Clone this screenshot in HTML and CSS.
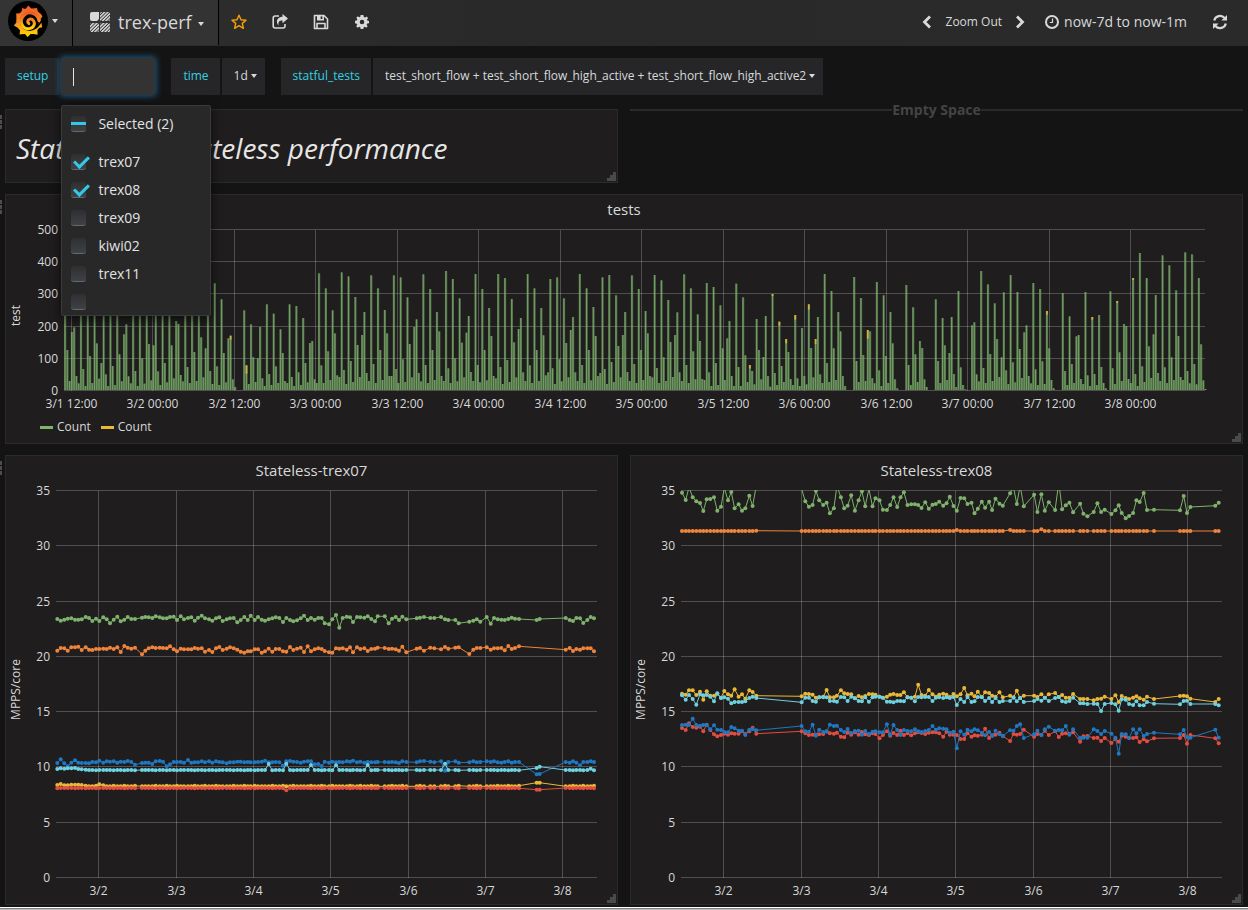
FILE: index.html
```html
<!DOCTYPE html>
<html lang="en">
<head>
<meta charset="utf-8">
<title>trex-perf</title>
<link rel="stylesheet" href="styles.css">
</head>
<body>
<header class="nav">
  <button class="nav-logo" aria-label="Main menu">
    <svg class="logo" viewBox="0 0 40 40" aria-hidden="true">
      <defs><linearGradient id="flame" x1="0" y1="0" x2="0" y2="1"><stop offset="0" stop-color="#f05a28"/><stop offset=".5" stop-color="#f68b22"/><stop offset="1" stop-color="#fcdb05"/></linearGradient></defs>
      <circle cx="20" cy="20" r="20" fill="#000"/>
      <path fill="url(#flame)" d="M20.3 4.5 23.4 7.6 27.3 7.2 29 6.8 29.8 10.6 33.2 13.2 34.4 15.6 32.6 18 33.6 22.6 34.3 26.2 31.2 27 29.4 29 29.6 33.8 25.6 33 22.6 33 19.6 36 17 32.9 13 33.2 11.6 33.4 12 29.2 9.4 26.6 5.8 24.6 8.2 21.8 8.4 17.6 8.2 12.6 11.8 12.2 13.8 10 14 7 17.4 8Z"/>
      <circle cx="21.5" cy="20.5" r="9.6" fill="#000"/>
      <path fill="none" stroke="url(#flame)" stroke-width="3" stroke-linecap="round" d="M31 19.6C29.6 12.6 22 10 17 13.4C12.4 16.6 12.2 22.8 15.4 25.8C18.8 29 24.4 28 26 24.2C27.4 20.6 24.6 17.4 21.6 18.2C19.4 18.8 19 21.4 20.8 22.4"/>
      <path fill="none" stroke="#000" stroke-width="1.6" d="M34.5 18.5C31 24 29.6 25.6 28 27"/>
    </svg>
    <span class="caret"></span>
  </button>
  <button class="nav-dash">
    <svg class="grid-icon" viewBox="0 0 20 20" aria-hidden="true">
      <defs><pattern id="hatch" width="2.4" height="2.4" patternUnits="userSpaceOnUse" patternTransform="rotate(45)"><rect width="1.5" height="2.4" fill="#d8d9da"/></pattern></defs>
      <path fill="#d8d9da" d="M2 0H9V7L7 9H2Q0 9 0 7V2Q0 0 2 0Z"/>
      <rect x="10" width="10" height="9" rx="1.5" fill="url(#hatch)"/>
      <rect y="11" width="9" height="9" rx="1.5" fill="url(#hatch)"/>
      <rect x="10" y="11" width="10" height="9" rx="1.5" fill="url(#hatch)"/>
    </svg>
    <span>trex-perf</span><span class="caret"></span>
  </button>
  <div class="nav-actions">
    <button class="icon-button star" aria-label="Star"><svg viewBox="0 0 16 16"><path fill="none" stroke="currentColor" stroke-width="1.4" stroke-linejoin="round" d="M8 1.2 10 5.7 15 6.2 11.3 9.4 12.4 14.3 8 11.7 3.6 14.3 4.7 9.4 1 6.2 6 5.7Z"/></svg></button>
    <button class="icon-button" aria-label="Share"><svg viewBox="0 0 16 16"><path fill="none" stroke="currentColor" stroke-width="1.6" d="M7 2H3.2Q1.2 2 1.2 4V12Q1.2 14 3.2 14H11Q13 14 13 12V10"/><path fill="currentColor" d="M10.5 0 16 4.6 10.5 9.2V6.6C7.4 6.6 6 7.8 6.6 11.4C3.3 8.2 5 2.8 10.5 2.8Z"/></svg></button>
    <button class="icon-button" aria-label="Save"><svg viewBox="0 0 16 16"><path fill="none" stroke="currentColor" stroke-width="1.6" stroke-linejoin="round" d="M1.5 1.5H11L14.5 5V14.5H1.5ZM4 14V9.5H12V14"/><path fill="currentColor" fill-rule="evenodd" d="M4 1H11V6.4H4ZM7.6 2.3V5.1H9.4V2.3Z"/></svg></button>
    <button class="icon-button" aria-label="Settings"><svg viewBox="0 0 16 16"><path fill="currentColor" fill-rule="evenodd" d="M6.6 1H9.4L9.8 2.9 11.1 3.5 12.8 2.4 14.1 4.2 12.9 5.4 13.3 6.6 15 6.9V9.2L13.2 9.6 12.7 10.9 13.7 12.3 12.1 13.8 10.7 12.8 9.7 13.3 9.4 15H6.6L6.3 13.3 5.2 12.8 3.8 13.8 2.2 12.2 3.2 10.8 2.8 9.7 1 9.3V6.8L2.8 6.5 3.3 5.3 2.3 3.8 3.9 2.3 5.2 3.3 6.3 2.8ZM8 5.7A2.3 2.3 0 1 0 8 10.3 2.3 2.3 0 1 0 8 5.7Z"/></svg></button>
  </div>
  <div class="nav-time">
    <button class="icon-button" aria-label="Earlier"><svg class="chevron" viewBox="0 0 10 14"><path fill="none" stroke="currentColor" stroke-width="2.8" d="M8 1.5 2.5 7 8 12.5"/></svg></button>
    <button class="zoom-out">Zoom Out</button>
    <button class="icon-button" aria-label="Later"><svg class="chevron" viewBox="0 0 10 14"><path fill="none" stroke="currentColor" stroke-width="2.8" d="M2 1.5 7.5 7 2 12.5"/></svg></button>
    <button class="range"><svg viewBox="0 0 14 14" aria-hidden="true"><circle cx="7" cy="7" r="6" fill="none" stroke="currentColor" stroke-width="2"/><path fill="none" stroke="currentColor" stroke-width="1.2" d="M7.5 3.5V7.5H4.8"/></svg>now-7d to now-1m</button>
    <button class="icon-button refresh" aria-label="Refresh"><svg viewBox="0 0 16 16"><path fill="none" stroke="currentColor" stroke-width="2.2" d="M2.2 6.6A6 6 0 0 1 12.6 4M13.8 9.4A6 6 0 0 1 3.4 12"/><path fill="currentColor" d="M15 1V6.6H9.4ZM1 15V9.4H6.6Z"/></svg></button>
  </div>
</header>

<section class="variables">
  <div class="variable">
    <label for="setup">setup</label>
    <div class="picker">
      <input id="setup" type="text" autofocus>
      <div class="menu">
        <label class="option head"><input type="checkbox" class="box partial"><span>Selected (2)</span></label>
        <label class="option"><input type="checkbox" class="box" checked><span>trex07</span></label>
        <label class="option"><input type="checkbox" class="box" checked><span>trex08</span></label>
        <label class="option"><input type="checkbox" class="box"><span>trex09</span></label>
        <label class="option"><input type="checkbox" class="box"><span>kiwi02</span></label>
        <label class="option"><input type="checkbox" class="box"><span>trex11</span></label>
        <label class="option"><input type="checkbox" class="box" aria-label="Empty value"></label>
      </div>
    </div>
  </div>
  <div class="variable">
    <label for="time">time</label>
    <div class="dropdown"><select id="time"><option>1d</option></select><span class="caret"></span></div>
  </div>
  <div class="variable">
    <label for="tests">statful_tests</label>
    <div class="dropdown"><select id="tests"><option>test_short_flow + test_short_flow_high_active + test_short_flow_high_active2</option></select><span class="caret"></span></div>
  </div>
</section>

<main class="dashboard">
  <div class="row halves">
    <span class="handle"></span>
    <section class="panel text-panel">
      <h1>Stateful and Stateless performance</h1>
      <svg class="grip" viewBox="0 0 9 9"><path d="M6 0H9V9H0V6H3V3H6Z"/></svg>
    </section>
    <div class="empty">Empty Space</div>
  </div>
  <div class="row">
    <span class="handle"></span>
    <section class="panel">
      <h2>tests</h2>
      <svg class="chart bars" id="chart-tests" role="img" aria-label="tests"></svg>
      <div class="legend"><span class="key green">Count</span><span class="key yellow">Count</span></div>
      <svg class="grip" viewBox="0 0 9 9"><path d="M6 0H9V9H0V6H3V3H6Z"/></svg>
    </section>
  </div>
  <div class="row halves">
    <span class="handle"></span>
    <section class="panel">
      <h2>Stateless-trex07</h2>
      <svg class="chart lines" id="chart-trex07" role="img" aria-label="Stateless-trex07"></svg>
      <svg class="grip" viewBox="0 0 9 9"><path d="M6 0H9V9H0V6H3V3H6Z"/></svg>
    </section>
    <section class="panel">
      <h2>Stateless-trex08</h2>
      <svg class="chart lines" id="chart-trex08" role="img" aria-label="Stateless-trex08"></svg>
      <svg class="grip" viewBox="0 0 9 9"><path d="M6 0H9V9H0V6H3V3H6Z"/></svg>
    </section>
  </div>
</main>
<div class="edge"></div>
<script src="charts.js"></script>
</body>
</html>
```

FILE: styles.css
```css
* { box-sizing: border-box; }
body { margin: 0; background: #141414; color: #d8d9da; font: 14px/20px "Open Sans", "Noto Sans", sans-serif; }
button, input, select { font: inherit; color: inherit; background: none; border: 0; padding: 0; margin: 0; }
button { cursor: pointer; }
svg { display: block; }

.caret { border: 4px solid transparent; border-top-color: currentColor; border-bottom: 0; border-left-width: 3px; border-right-width: 3px; }

.nav { display: flex; height: 46px; background: linear-gradient(90deg, #2f2f2f, #292929 40%, #2a2a2a); }
.nav-logo { display: flex; align-items: center; gap: 4px; width: 73px; padding: 0 0 4px 8px; background: #343434; border-right: 1px solid #000; }
.logo { width: 40px; height: 40px; }
.nav-dash { display: flex; align-items: center; gap: 8px; width: 146px; height: 45px; padding: 0 0 1px 17px; background: #333; border-right: 1px solid #000; font-size: 18px; }
.nav-dash .caret { margin-top: 4px; margin-left: -2px; }
.grid-icon { width: 20px; height: 20px; }
.nav-actions { display: flex; align-items: center; gap: 25px; padding: 0 0 2px 12px; }
.icon-button svg { width: 16px; height: 16px; }
.star { color: #f99f08; }
.nav-time { display: flex; align-items: center; margin-left: auto; padding: 0 20px 2px 0; }
.nav-time .chevron { width: 10px; height: 14px; }
.zoom-out { font-size: 12px; padding: 0 13px 0 14px; }
.range { display: flex; align-items: center; gap: 5px; margin-left: 20px; font-size: 14px; }
.range svg { width: 14px; height: 14px; }
.refresh { margin-left: 25px; }

.variables { display: flex; gap: 16px; padding: 12px 5px 14px; font-size: 12px; }
.variable { display: flex; gap: 2px; height: 37px; }
.variable > label { display: flex; align-items: center; padding: 0 11px 1px 12px; background: #262628; color: #33d1e0; }
.picker { position: relative; }
.picker > input { width: 94px; height: 37px; padding: 0 11px; background: linear-gradient(#e3e3e3, #e3e3e3) 12px 10px / 1px 18px no-repeat #333; border-radius: 2px; outline: 0; box-shadow: 0 0 6px 1px #1f5f8b; caret-color: transparent; }
.dropdown { display: flex; align-items: center; gap: 2px; padding: 0 8px 1px 12px; background: #262628; }
.dropdown select { appearance: none; }

.menu { position: absolute; z-index: 2; top: 47px; left: 0; width: 150px; height: 211px; padding: 4px 9px 0; overflow: hidden; background: #282828; border: 1px solid #3a3a3a; border-radius: 2px; box-shadow: 0 3px 12px #0009; color: #e3e3e3; font-size: 14px; }
.option { display: flex; align-items: center; gap: 12px; height: 28px; }
.option.head { margin-bottom: 10px; }
.box { appearance: none; position: relative; width: 15px; height: 16px; flex: none; background: linear-gradient(#2e2f31, #404145); border-radius: 3px; border-bottom: 1px solid #5d6b73; }
.box:checked::after { content: ""; position: absolute; left: 6px; top: -1px; width: 6px; height: 12px; border: solid #33c9e6; border-width: 0 3px 3px 0; transform: rotate(45deg); }
.box.partial::after { content: ""; position: absolute; left: 0; top: 6px; width: 15px; height: 3px; background: #33c9e6; }

.dashboard { display: flex; flex-direction: column; gap: 11px; padding: 0 5px 2px; }
.row { position: relative; display: grid; grid-template-columns: minmax(0, 1fr); gap: 12px; }
.row.halves { grid-template-columns: repeat(2, minmax(0, 1fr)); }
.handle { position: absolute; left: -5px; top: 6px; width: 2px; height: 14px; background: repeating-linear-gradient(#4d4d4d 0 4px, transparent 4px 5px); }
.panel { position: relative; background: #1f1d1d; border: 1px solid #2b2b2b; padding-bottom: 5px; }
.text-panel { padding: 23px 10px 19px; }
.text-panel h1 { margin: 0; font: italic 28px/30px "Open Sans", "Noto Sans", sans-serif; color: #e6e6e6; white-space: nowrap; }
.panel h2 { margin: 0; padding-top: 2px; font-size: 15px; line-height: 25px; font-weight: 400; text-align: center; }
.empty { display: flex; align-items: center; height: 2px; line-height: 2px; font-weight: 700; color: #444; }
.empty::before, .empty::after { content: ""; flex: 1; height: 2px; background: #2a2a2a; }
.grip { position: absolute; right: 1px; bottom: 1px; width: 9px; height: 9px; fill: #4a4a4a; }

.chart { width: 100%; overflow: visible; font-size: 12px; fill: #d8d9da; }
.chart.bars { height: 190px; }
.chart.lines { height: 416px; }
.grid-line { stroke: #fff; stroke-opacity: .22; }
.axis-name { font-size: 12px; }
.legend { display: flex; gap: 10px; padding-left: 34px; height: 26px; font-size: 12px; }
.key { display: flex; align-items: center; gap: 4px; height: 30px; }
.key::before { content: ""; width: 13px; height: 3px; background: #7eb26d; }
.key.yellow::before { background: #eab839; }

.edge { height: 3px; border-top: 1px solid #fff; border-bottom: 1px solid #bbb; background: #808080; }
```

FILE: charts.js
```js
const NS = "http://www.w3.org/2000/svg";
const GREEN = "#7eb26d", YELLOW = "#eab839", CYAN = "#6ed0e0", ORANGE = "#ef843c", RED = "#e24d42", BLUE = "#1f78c1";
const nums = s => s.trim().split(/\s+/).map(v => v === "-" ? null : +v);

function add(parent, tag, attrs, text) {
  const el = document.createElementNS(NS, tag);
  for (const k in attrs) el.setAttribute(k, attrs[k]);
  if (text !== undefined) el.textContent = text;
  parent.appendChild(el);
  return el;
}

function frame(svg, o) {
  svg.replaceChildren();
  const width = svg.clientWidth;
  const p = { left: o.left, right: width - o.rightPad, top: 8, bottom: 8 + o.height };
  p.w = p.right - p.left;
  const last = o.yLabels.length - 1;
  o.yLabels.forEach((t, i) => {
    const y = Math.round(p.top + o.height * i / last) - .5;
    add(svg, "line", { x1: p.left, x2: p.right, y1: y, y2: y, class: "grid-line" });
    add(svg, "text", { x: p.left - 6, y: y + 4, "text-anchor": "end" }, t);
  });
  o.xLabels.forEach((t, i) => {
    const x = Math.round(p.left + p.w * (o.first + i * o.step)) + .5;
    add(svg, "line", { x1: x, x2: x, y1: p.top, y2: p.bottom, class: "grid-line" });
    add(svg, "text", { x, y: p.bottom + 17, "text-anchor": "middle" }, t);
  });
  const cy = (p.top + p.bottom) / 2 + 5;
  add(svg, "text", { x: 14, y: cy, "text-anchor": "middle", class: "axis-name", transform: `rotate(-90 14 ${cy})` }, o.name);
  return p;
}

/* Bar tops per 20 minutes, counted down from a floor of 600. */
const TOPS = nums(`
300 480 573 426 412 558 580 290 537 588 310 498 579 330 460 566 519 280 553 588
300 528 585 320 493 574 433 403 559 580 290 543 588 310 505 581 340 462 571 466
285 544 585 300 519 577 345 466 565 393 402 555 574 280 531 579 300 486 573 335
442 562 475 372 543 582 280 529 585 328 489 577 445 437 568 591 600 600 600 361
526 582 403 502 576 505 411 565 588 343 552 585 371 529 579 418 489 573 579 343
561 588 348 547 585 384 519 577 459 453 568 579 250 526 579 295 484 570 361 430
556 561 247 540 582 259 513 576 321 465 561 435 366 549 573 256 522 579 295 480
570 360 430 558 558 256 537 579 262 508 576 322 462 562 411 388 549 574 253 525
579 297 480 570 366 424 558 573 243 535 579 267 505 574 325 458 562 428 378 546
573 252 525 577 297 480 571 354 438 558 565 252 531 582 264 510 576 327 457 562
417 384 547 573 252 526 579 295 480 573 354 436 556 547 267 535 582 262 508 574
325 459 562 420 381 547 573 252 525 579 295 480 571 351 438 558 549 262 537 582
255 516 576 316 468 562 435 366 546 573 256 522 579 297 480 570 363 430 558 562
255 534 579 271 502 573 330 456 561 435 367 547 573 253 525 579 295 484 568 373
453 567 570 279 547 588 291 519 585 346 475 570 445 393 558 588 281 531 588 322
496 576 525 543 583 387 480 568 501 378 558 590 312 549 585 395 528 576 447 486
567 585 375 565 588 414 558 583 343 474 562 447 381 553 579 252 519 576 303 475
570 366 424 558 588 600 600 600 261 513 576 324 495 573 420 424 565 580 276 541
588 316 498 579 366 460 568 595 600 600 600 285 525 585 352 493 576 453 474 568
591 600 600 600 328 513 579 384 466 570 489 381 552 591 303 532 585 598 600 600
406 397 553 574 243 534 579 283 492 573 340 447 561 502 307 541 582 255 517 577
306 477 564 427 406 558 580 279 538 585 297 514 582 363 475 570 595 600 600 600
309 543 585 379 522 579 439 435 567 582 306 556 588 381 552 585 375 531 579 595
600 304 535 582 333 487 573 402 408 567 579 264 552 588 189 529 576 264 469 564
433 315 549 573 196 532 579 226 502 570 301 438 561 570 187 543 580 193 522 583
264 463 571 597`);
/* Height of the second series on top of a bar, by bar index. */
const CAPS = { 73: 12, 80: 25, 302: 10, 312: 6, 315: 12, 318: 13, 322: 14, 328: 16, 331: 15, 354: 26, 433: 11, 453: 8, 464: 6, 471: 6 };

function drawTests() {
  const svg = document.getElementById("chart-tests");
  const days = ["3/1 12:00", "3/2 00:00", "3/2 12:00", "3/3 00:00", "3/3 12:00", "3/4 00:00", "3/4 12:00", "3/5 00:00", "3/5 12:00", "3/6 00:00", "3/6 12:00", "3/7 00:00", "3/7 12:00", "3/8 00:00"];
  const p = frame(svg, { left: 58, rightPad: 37, height: 161, name: "test", yLabels: ["500", "400", "300", "200", "100", "0"], xLabels: days, first: .006, step: .07143 });
  const pitch = p.w / 503.2;
  TOPS.forEach((top, i) => {
    const h = (600 - top) / 3, x = p.left + i * pitch;
    if (h <= 0) return;
    add(svg, "rect", { x, y: p.bottom - 1 - h, width: pitch, height: h, fill: GREEN, "fill-opacity": .55 });
    add(svg, "rect", { x: x + .5, y: p.bottom - 1 - h, width: 1, height: h, fill: GREEN, "fill-opacity": .75 });
    if (CAPS[i]) add(svg, "rect", { x: x + .2, y: p.bottom - 1 - h, width: 1.8, height: CAPS[i] / 3, fill: YELLOW, "fill-opacity": .8 });
  });
}

function drawLines(id, xs, series, x0, x1) {
  const svg = document.getElementById(id);
  const p = frame(svg, { left: 50, rightPad: 20, height: 387, name: "MPPS/core", yLabels: ["35", "30", "25", "20", "15", "10", "5", "0"], xLabels: ["3/2", "3/3", "3/4", "3/5", "3/6", "3/7", "3/8"], first: .0785, step: .14286 });
  const clip = add(svg, "clipPath", { id: id + "-clip" });
  add(clip, "rect", { x: p.left - 3, y: p.top - 1, width: p.w + 6, height: 390 });
  const g = add(svg, "g", { "clip-path": `url(#${id}-clip)` });
  for (const [color, ys] of series) {
    const pts = [];
    xs.forEach((x, i) => {
      if (ys[i] == null) return;
      pts.push([p.left + (x - x0) / (x1 - x0) * p.w, p.top + (ys[i] - 121) / 3]);
    });
    add(g, "polyline", { points: pts.map(q => q.map(v => v.toFixed(1)).join()).join(" "), fill: "none", stroke: color, "stroke-width": 1 });
    for (const [x, y] of pts) if (y >= p.top - 1) add(g, "circle", { cx: x.toFixed(1), cy: y.toFixed(1), r: 2, fill: color });
  }
}

const flat = (xs, base, jitter, changes) => xs.map((x, i) => changes[x] ?? base + (i * 7 % 11 < 3 ? jitter : 0));

const X7 = nums(`172 182 193 203 214 225 235 245 257 267 277 288 298 310 320 330 341 352 362 373 383 394 405 426 436 446 457 467 479 489 500 510 521 531 542 552 564 574 584 594 605 615 627 637 648 658 668 680 690 701 712 722 733 743 752 764 774 785 795 806 817 827 838 849 859 870 880 891 902 912 923 933 944 955
965 974 987 997 1008 1018 1028 1040 1050 1059 1071 1081 1093 1103 1114 1125 1133 1154 1166 1176 1187 1197 1207 1219 1250 1260 1272 1291 1303 1323 1335 1345 1366 1376 1408 1420 1430 1441 1460 1472 1482 1493 1504 1514 1525 1535 1545 1557 1610 1619 1697 1709 1719 1729 1740 1750 1762 1772 1782`);
const shift = (list, from, by) => list.map((v, i) => v == null || i < from ? v : v + by);
const G7 = shift(nums(`505 510 507 504 503 507 507 506 499 502 511 504 511 500 506 518 507 498 512 507 499 505 505 501 499 500 502 497 500 503 503 499 498 508 497 506 502 500 510 501 495 503 506 510 503 500 511 506 503 502 515 508 499 508 495 508 499 507 510 506 503 500 502 514 502 508 512 509 503 495 508 502 507 502
52 68 71 56 43 81 52 48 50 64 49 50 51 47 55 62 47 47 68 54 49 58 48 56 53 51 49 52 52 49 56 58 58 68 63 60 56 63 49 69 52 56 57 58 55 51 54 55 58 55 52 58 61 52 53 67 58 49 53`), 74, 450);
const O7 = shift(nums(`600 592 593 600 590 590 588 598 590 597 598 595 595 594 595 591 595 590 604 586 591 594 591 611 600 593 590 592 591 592 593 587 596 602 594 596 596 596 592 594 593 603 598 604 593 589 598 594 590 593 597 603 606 602 602 596 596 606 602 594 603 595 595 602 603 589 598 594 591 604 587 602 596 593
145 151 155 156 143 144 143 147 140 155 140 145 143 151 145 144 141 142 145 144 146 150 138 155 144 142 150 141 143 146 139 144 141 140 160 147 142 142 140 147 143 143 142 149 136 145 142 137 - - 147 142 151 145 147 143 143 143 152`), 74, 450);
const B7 = shift(nums(`487 476 488 497 486 479 486 487 487 488 484 485 480 486 482 483 482 486 483 484 481 484 492 487 486 486 490 482 481 483 497 491 484 484 484 486 478 486 485 485 482 485 482 486 482 484 485 488 485 485 483 483 485 484 485 485 484 483 480 485 485 484 485 495 482 481 483 484 486 483 482 482 491 490
496 483 486 483 485 484 485 482 483 480 485 483 486 484 485 485 484 484 485 484 485 487 482 484 485 482 481 483 485 482 510 484 482 486 485 482 485 484 482 484 482 485 486 484 482 486 484 484 521 520 484 486 482 486 494 484 484 482 484`), 0, 450);
const C7 = flat(X7, 958, 1, { 172: 955, 182: 953, 193: 954, 203: 953, 214: 953, 225: 952, 235: 955, 245: 956, 257: 957, 806: 940, 859: 939, 933: 943, 1008: 944, 1103: 943, 1335: 939, 1610: 952, 1619: 948, 1772: 954 });
const Y7 = flat(X7, 1007, -2, { 172: 1003, 182: 1000, 193: 1004, 203: 1004, 214: 1002, 225: 1002, 235: 1002, 245: 1003, 298: 1001, 310: 1004, 1610: 996, 1619: 996 });
const R7 = flat(X7, 1012, 1, { 859: 1019, 1610: 1017, 1619: 1017 });

const X8 = nums(`156 167 177 188 199 210 220 230 241 252 262 273 283 294 304 314 326 336 346 358 368 379 515 526 537 548 558 568 580 590 600 612 621 633 643 653 664 675 686 696 706 717 728 737 749 759 771 781 791 802 812 822 833 844 855 865 875 886 897 908 918 928 940 950 960 971 981 992 1003 1013 1025 1034 1044 1056 1066 1078 1087 1097 1109 1119 1141 1151 1161 1171 1182 1213 1223 1235 1245 1257 1276 1287 1297 1308 1319 1330 1351 1361 1373 1392 1403 1414 1425 1445 1457 1467 1476 1488 1498 1510 1520 1530 1542 1552 1573 1651 1662 1672 1682 1757 1767`);
const G8 = nums(`126 148 110 140 152 157 181 146 145 140 180 168 112 149 124 173 161 180 173 135 166 105 115 152 168 163 120 149 163 156 188 173 105 140 173 165 134 180 149 122 167 115 167 143 149 177 178 163 140 169 140 125 163 161 161 163 172 155 174 162 160 153 165 158 138 166 180 142 143 160 156 188 174 153 171 153 178 144 159 165 128 110 160 105 167 132 184 131 180 155 178 95 176 164 156 185 159 189 197 184 158 184 177 190 179 164 187 203 196 187 149 154 127 178 177 179 136 187 169 165 156`);
const Y8 = nums(`729 732 719 719 733 723 747 722 735 735 729 741 721 731 735 716 738 731 744 719 724 735 737 729 730 732 741 740 738 718 740 740 735 719 728 730 731 743 736 740 736 730 731 732 738 741 738 732 730 733 733 725 740 741 738 702 733 735 718 731 738 732 729 732 739 730 737 731 712 734 729 737 723 739 725 727 735 738 725 740 735 740 720 742 735 735 739 731 741 731 727 739 733 741 741 730 745 745 745 749 745 744 738 745 734 754 736 742 745 741 737 743 747 738 745 736 735 737 744 754 745`);
const C8 = nums(`734 747 733 745 762 731 734 733 738 752 728 742 740 744 758 754 754 754 752 742 738 742 755 741 741 751 753 740 740 740 751 751 753 739 740 751 738 743 751 752 740 753 740 738 738 741 753 753 755 751 751 752 740 741 752 739 740 739 739 751 741 740 742 740 742 739 763 745 754 739 754 752 739 740 751 742 754 742 754 751 751 741 752 742 754 751 745 750 741 751 742 739 752 754 751 741 758 758 760 759 760 781 760 757 761 780 746 747 760 763 752 764 764 754 759 761 751 750 760 760 764`);
const B8 = nums(`823 822 823 804 823 825 823 823 836 824 837 838 844 845 829 833 840 840 853 837 835 839 826 842 843 822 855 837 844 843 822 826 825 838 844 835 847 841 840 852 841 850 843 842 845 845 821 852 823 838 853 838 841 842 836 842 844 841 838 826 837 833 834 836 846 843 893 842 852 837 842 836 839 847 854 844 856 840 851 856 839 840 826 821 862 851 840 853 836 828 840 838 839 826 852 836 862 861 861 836 841 850 841 849 861 909 850 851 862 836 848 836 856 850 846 851 838 859 861 837 861`);
const R8 = nums(`832 838 818 829 831 828 842 822 838 851 857 853 849 852 848 849 849 842 850 842 831 849 842 848 853 852 852 851 850 842 848 849 846 858 860 846 852 845 852 844 851 853 848 850 863 853 842 855 847 853 840 853 848 854 848 845 847 850 846 845 845 848 858 843 852 852 853 865 865 848 858 854 855 852 834 862 854 852 846 856 871 850 852 850 837 858 850 853 840 853 842 859 849 848 850 845 873 857 856 862 861 871 862 877 865 873 855 858 862 862 860 874 866 872 863 862 853 879 853 863 878`);
const O8 = flat(X8, 241, 0, { 379: 240, 981: 238, 1141: 238, 1235: 236 });

function draw() {
  drawTests();
  drawLines("chart-trex07", X7, [[GREEN, G7], [ORANGE, O7], [BLUE, B7], [CYAN, C7], [YELLOW, Y7], [RED, R7]], 168, 1791);
  drawLines("chart-trex08", X8, [[GREEN, G8], [YELLOW, Y8], [CYAN, C8], [ORANGE, O8], [RED, R8], [BLUE, B8]], 153, 1777);
}
draw();
addEventListener("resize", draw);
document.getElementById("setup").focus();
document.querySelector(".partial").indeterminate = true;
```
